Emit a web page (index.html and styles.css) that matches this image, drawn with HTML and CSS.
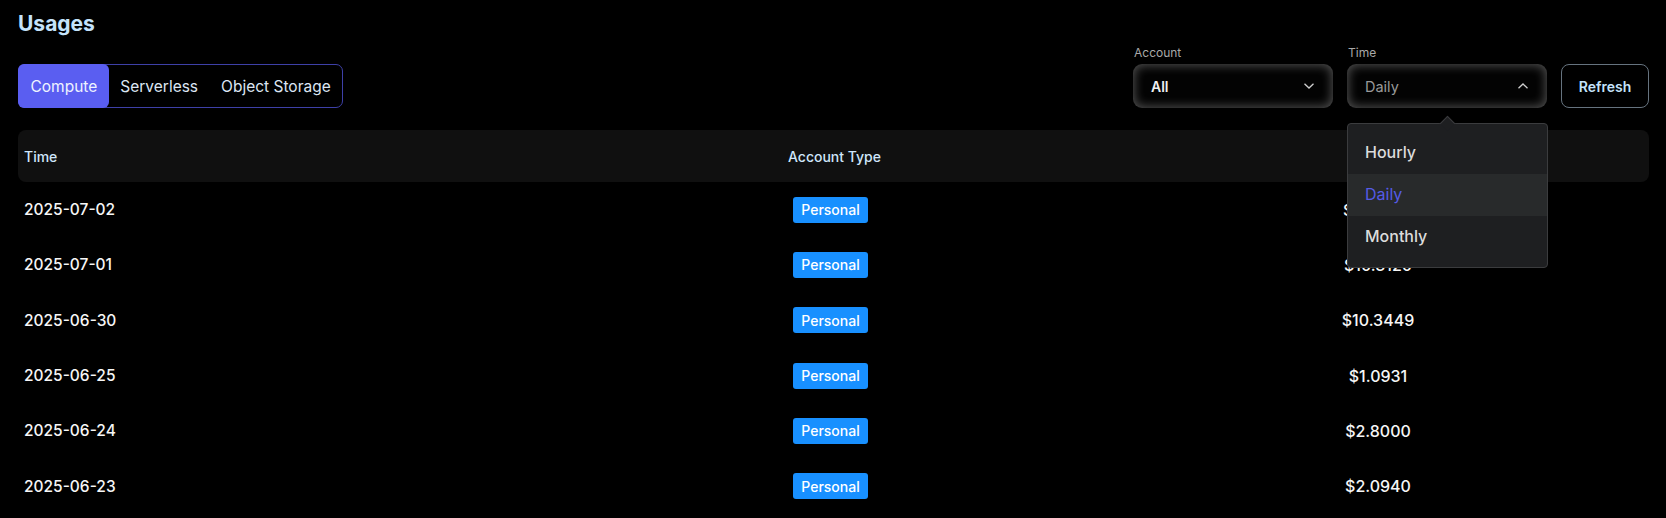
FILE: index.html
```html
<!DOCTYPE html>
<html>
<head>
<meta charset="utf-8">
<link rel="stylesheet" href="styles.css">
</head>
<body>
<div class="page">
  <h1 class="title">Usages</h1>
  <div class="toolbar">
    <div class="tabs">
      <div class="tab active">Compute</div>
      <div class="tab">Serverless</div>
      <div class="tab">Object Storage</div>
    </div>
    <div class="filters">
      <div class="field">
        <div class="label">Account</div>
        <div class="select">
          <span class="value strong">All</span>
          <svg class="chev" width="12" height="8" viewBox="0 0 12 8"><path d="M1.5 1.8 L6 6 L10.5 1.8" fill="none" stroke="#cfcfcf" stroke-width="1.3"/></svg>
        </div>
      </div>
      <div class="field">
        <div class="label">Time</div>
        <div class="select open">
          <span class="value muted">Daily</span>
          <svg class="chev" width="12" height="8" viewBox="0 0 12 8"><path d="M1.5 6.2 L6 2 L10.5 6.2" fill="none" stroke="#cfcfcf" stroke-width="1.3"/></svg>
          <div class="menu">
            <div class="caret"></div>
            <div class="item">Hourly</div>
            <div class="item selected">Daily</div>
            <div class="item">Monthly</div>
          </div>
        </div>
      </div>
      <button class="refresh">Refresh</button>
    </div>
  </div>
  <div class="table">
    <div class="row head">
      <div class="cell c1">Time</div>
      <div class="cell c2">Account Type</div>
      <div class="cell c3">Amount</div>
    </div>
    <div class="row">
      <div class="cell c1">2025-07-02</div>
      <div class="cell c2b"><span class="badge">Personal</span></div>
      <div class="cell c3">$10.3297</div>
    </div>
    <div class="row">
      <div class="cell c1">2025-07-01</div>
      <div class="cell c2b"><span class="badge">Personal</span></div>
      <div class="cell c3">$10.3120</div>
    </div>
    <div class="row">
      <div class="cell c1">2025-06-30</div>
      <div class="cell c2b"><span class="badge">Personal</span></div>
      <div class="cell c3">$10.3449</div>
    </div>
    <div class="row">
      <div class="cell c1">2025-06-25</div>
      <div class="cell c2b"><span class="badge">Personal</span></div>
      <div class="cell c3">$1.0931</div>
    </div>
    <div class="row">
      <div class="cell c1">2025-06-24</div>
      <div class="cell c2b"><span class="badge">Personal</span></div>
      <div class="cell c3">$2.8000</div>
    </div>
    <div class="row">
      <div class="cell c1">2025-06-23</div>
      <div class="cell c2b"><span class="badge">Personal</span></div>
      <div class="cell c3">$2.0940</div>
    </div>
  </div>
</div>
</body>
</html>
```

FILE: styles.css
```css
* { box-sizing: border-box; }
html, body {
  margin: 0;
  padding: 0;
  background: #000;
  height: 100%;
  overflow: hidden;
}
body {
  font-family: Inter, "Noto Sans", sans-serif;
  color: #f2f2f2;
}
.page {
  padding: 10px 17px 0 18px;
}
.title {
  margin: 0;
  font-size: 21px;
  line-height: 28px;
  font-weight: 700;
  color: #c4e3fb;
}
.toolbar {
  margin-top: 6px;
  display: flex;
  justify-content: space-between;
  align-items: flex-end;
}
.tabs {
  display: flex;
  border: 1px solid #3e40a8;
  border-radius: 7px;
  height: 44px;
  align-items: stretch;
}
.tab {
  display: flex;
  align-items: center;
  padding: 0 11.5px;
  font-size: 15.5px;
  color: #dde6f3;
  border-radius: 6px;
}
.tab.active {
  background: #5a5ef1;
  color: #eef3ff;
  margin: -1px 0 -1px -1px;
  padding-left: 12.5px;
}
.filters {
  display: flex;
  align-items: flex-end;
  gap: 14px;
}
.field {
  display: flex;
  flex-direction: column;
  gap: 3px;
}
.label {
  font-size: 12px;
  line-height: 17px;
  color: #a9a9a9;
  padding-left: 1px;
}
.select {
  position: relative;
  width: 200px;
  height: 44px;
  border-radius: 9px;
  background: #030303;
  box-shadow: inset 0 0 11px 1px rgba(255, 255, 255, 0.33);
  display: flex;
  align-items: center;
  justify-content: space-between;
  padding: 0 18px 0 18px;
}
.value { font-size: 14px; }
.value.strong { color: #f0f0f0; font-weight: 600; }
.value.muted { color: #9a9a9a; font-size: 14.5px; }
.chev { display: block; }
.menu {
  position: absolute;
  left: 0;
  top: 59px;
  width: 201px;
  padding: 8px 0 9px;
  background: #1e1f21;
  border: 1px solid #3b3c3e;
  border-radius: 4px;
  z-index: 5;
}
.caret {
  position: absolute;
  top: -6px;
  left: 94px;
  width: 11px;
  height: 11px;
  background: #1e1f21;
  border-top: 1px solid #3b3c3e;
  border-left: 1px solid #3b3c3e;
  transform: rotate(45deg);
}
.item {
  position: relative;
  height: 42px;
  display: flex;
  align-items: center;
  padding-left: 17px;
  padding-bottom: 2px;
  font-size: 16px;
  color: #dcdcdc;
  font-weight: 500;
}
.item.selected {
  background: #282a2b;
  color: #555be6;
  font-weight: 400;
}
.refresh {
  width: 88px;
  height: 44px;
  background: #000;
  border: 1px solid #66737f;
  border-radius: 8px;
  color: #c4e3fb;
  font-family: Inter, "Noto Sans", sans-serif;
  font-size: 14px;
  font-weight: 600;
  padding: 0;
}
.table {
  margin-top: 22px;
}
.row {
  display: grid;
  grid-template-columns: 764px 325px 1fr;
  height: 55.3px;
  align-items: center;
}
.row.head {
  height: 52px;
  background: #101010;
  border-radius: 8px;
}
.head .cell {
  font-size: 14px;
  font-weight: 500;
  color: #cfe6fb;
}
.cell {
  font-size: 15.5px;
  font-weight: 500;
  color: #f6f6f6;
}
.c1 { padding-left: 6px; }
.c2 { padding-left: 6px; }
.c2b { padding-left: 11px; display: flex; }
.c3 { text-align: center; font-size: 16px; }
.badge {
  display: inline-flex;
  align-items: center;
  justify-content: center;
  width: 75px;
  height: 26px;
  background: #1890ff;
  border-radius: 3px;
  color: #fff;
  font-size: 14px;
  font-weight: 500;
}
```
